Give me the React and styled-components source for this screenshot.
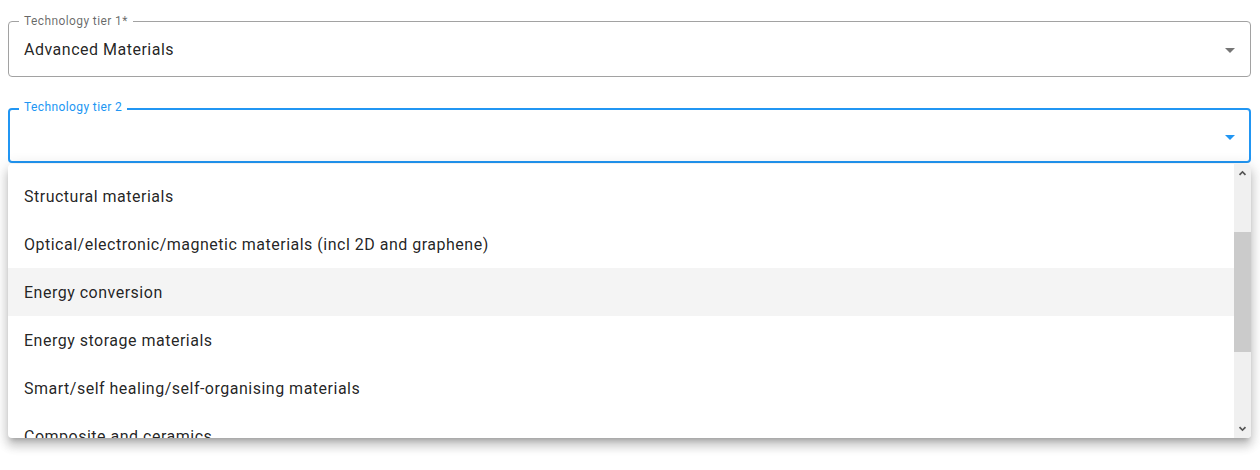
import React from "react";
import styled, { createGlobalStyle } from "styled-components";

const GlobalStyle = createGlobalStyle`
	html, body {
		margin: 0;
		background: #fff;
		font-family: Roboto, "Liberation Sans", sans-serif;
	}
`;

const Page = styled.div`
	box-sizing: border-box;
	min-height: 470px;
	padding: 21px 9px 0 8px;
	display: flex;
	flex-direction: column;
	gap: 31px;
`;

const Field = styled.div`
	position: relative;
	box-sizing: border-box;
	height: ${(p) => (p.$focused ? "55px" : "56px")};
	border: ${(p) => (p.$focused ? "2px solid #2196f3" : "1px solid #a2a2a2")};
	border-radius: 4px;
	display: flex;
	align-items: center;
	padding: 0 ${(p) => (p.$focused ? "7px" : "8px")} 0 15px;
`;

const Label = styled.span`
	position: absolute;
	top: ${(p) => (p.$focused ? "-10px" : "-8px")};
	left: ${(p) => (p.$focused ? "9px" : "10px")};
	padding: 0 5px;
	background: #fff;
	font-size: 12px;
	line-height: 14px;
	letter-spacing: 0.4px;
	color: ${(p) => (p.$focused ? "#2196f3" : "rgba(0, 0, 0, 0.6)")};
`;

const Value = styled.span`
	flex: 1;
	font-size: 16px;
	letter-spacing: 0.5px;
	color: rgba(0, 0, 0, 0.87);
	padding-top: 1px;
`;

const Arrow = styled.svg`
	width: 24px;
	height: 24px;
	fill: ${(p) => (p.$focused ? "#2196f3" : "rgba(0, 0, 0, 0.54)")};
	margin-top: 2px;
`;

const Menu = styled.div`
	position: absolute;
	top: 54px;
	left: -2px;
	right: -2px;
	height: 274px;
	background: #fff;
	border-radius: 4px;
	overflow: hidden;
	display: flex;
	box-shadow: 0px 5px 5px -3px rgba(0, 0, 0, 0.2),
		0px 8px 10px 1px rgba(0, 0, 0, 0.14), 0px 3px 14px 2px rgba(0, 0, 0, 0.12);
	z-index: 10;
`;

const List = styled.ul`
	flex: 1;
	margin: 0;
	padding: 8px 0 0;
	list-style: none;
	overflow: hidden;
`;

const Item = styled.li`
	flex: none;
	height: 48px;
	display: flex;
	align-items: center;
	padding: 0 16px;
	font-size: 16px;
	letter-spacing: 0.5px;
	color: rgba(0, 0, 0, 0.87);
	background: ${(p) => (p.$hover ? "#f4f4f4" : "transparent")};
`;

const Scrollbar = styled.div`
	width: 17px;
	background: #f0f0f0;
	display: flex;
	flex-direction: column;
`;

const ScrollButton = styled.div`
	height: 17px;
	display: flex;
	align-items: center;
	justify-content: center;
	svg {
		width: 9px;
		height: 9px;
		fill: #555;
	}
`;

const Gap = styled.div`
	height: ${(p) => p.$h || "auto"};
	flex: ${(p) => (p.$grow ? 1 : "none")};
`;

const Thumb = styled.div`
	height: 120px;
	background: #cbcbcb;
`;

const items = [
	"Structural materials",
	"Optical/electronic/magnetic materials (incl 2D and graphene)",
	"Energy conversion",
	"Energy storage materials",
	"Smart/self healing/self-organising materials",
	"Composite and ceramics",
];

const DropIcon = ({ focused }) => (
	<Arrow $focused={focused} viewBox="0 0 24 24">
		<path d="M7 10l5 5 5-5z" />
	</Arrow>
);

const App = () => {
	return (
		<>
			<GlobalStyle />
			<Page>
				<Field>
					<Label>Technology tier 1*</Label>
					<Value>Advanced Materials</Value>
					<DropIcon />
				</Field>
				<Field $focused>
					<Label $focused>Technology tier 2</Label>
					<Value />
					<DropIcon focused />
					<Menu>
						<List>
							{items.map((item, i) => (
								<Item key={item} $hover={i === 2}>
									{item}
								</Item>
							))}
						</List>
						<Scrollbar>
							<ScrollButton>
								<svg viewBox="0 0 10 10">
									<path d="M1 7l4-4 4 4-1.4 1.2L5 5.6 2.4 8.2z" />
								</svg>
							</ScrollButton>
							<Gap $h="51px" />
							<Thumb />
							<Gap $grow />
							<ScrollButton>
								<svg viewBox="0 0 10 10">
									<path d="M1 3l4 4 4-4-1.4-1.2L5 4.4 2.4 1.8z" />
								</svg>
							</ScrollButton>
						</Scrollbar>
					</Menu>
				</Field>
			</Page>
		</>
	);
};

export default App;
